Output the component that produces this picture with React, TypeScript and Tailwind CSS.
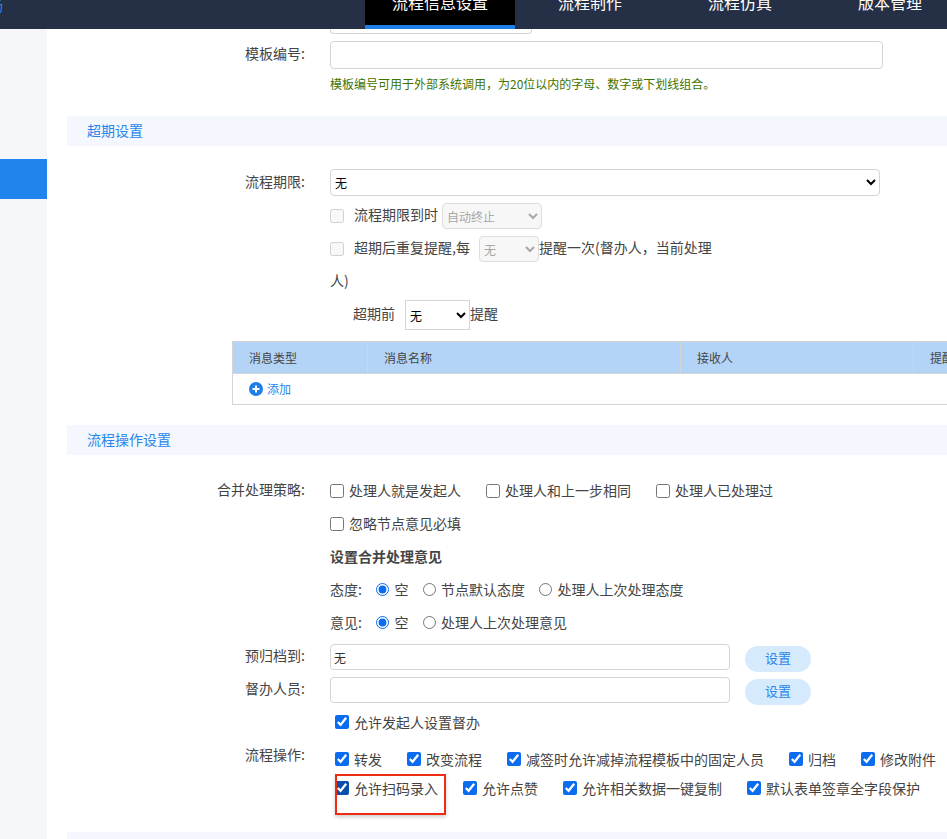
import React from 'react';

const Check = ({ label, checked = false, dark = false }: { label: string; checked?: boolean; dark?: boolean }) => (
  <label className="flex items-center gap-[5px] whitespace-nowrap">
    <input
      type="checkbox"
      defaultChecked={checked}
      className={`m-0 w-[14px] h-[14px] ${dark ? 'accent-[#0a4fa8]' : 'accent-[#0b6cf0]'}`}
    />
    <span>{label}</span>
  </label>
);

const Radio = ({ label, checked = false, name }: { label: string; checked?: boolean; name: string }) => (
  <label className="flex items-center gap-[5.5px] whitespace-nowrap">
    <input type="radio" name={name} defaultChecked={checked} className="m-0 w-[13px] h-[13px] accent-[#0b6cf0]" />
    <span>{label}</span>
  </label>
);

const Section = ({ title, className = '' }: { title: string; className?: string }) => (
  <div className={`h-[30px] bg-[#f4f7fd] pl-5 leading-[28px] text-[#2a85ea] ${className}`}>{title}</div>
);

const FieldLabel = ({ children }: { children: React.ReactNode }) => (
  <span className="w-[238px] shrink-0 text-right mr-[25px] pb-[3px] whitespace-nowrap">{children}</span>
);

const SetButton = () => (
  <button className="w-[66px] h-[26px] mt-[2px] ml-[15px] pb-[2px] rounded-[13px] bg-[#d6eafd] text-[13px] text-[#2a85ea]">设置</button>
);

const tabs = ['流程信息设置', '流程制作', '流程仿真', '版本管理'];

const App: React.FC = () => {
  return (
    <div className="h-[839px] overflow-hidden bg-white text-[14px] text-[#444] font-['Noto_Sans_CJK_SC','Liberation_Sans',sans-serif]">
      <div className="h-[29px] bg-[#253046] flex overflow-hidden">
        <div className="w-[365px] shrink-0 text-[#2a85ea] leading-[14px]">
          <span className="block -ml-[11px] -mt-[2px]">场</span>
        </div>
        {tabs.map((t, i) => (
          <div
            key={t}
            className={`w-[150px] shrink-0 h-[29px] text-center text-[16px] text-white leading-[16px] ${i === 0 ? 'bg-black border-b-4 border-[#1f7fe8]' : ''}`}
          >
            <span className="block -mt-[6px]">{t}</span>
          </div>
        ))}
      </div>

      <div className="flex">
        <div className="w-[47px] shrink-0 h-[810px] bg-[#f5f7fb] pt-[130px]">
          <div className="h-[40px] bg-[#2183ec]"></div>
        </div>

        <div className="w-[880px] shrink-0 ml-5">
          <div className="w-[202px] h-[5px] ml-[263px] border border-t-0 border-[#d5d5d5] rounded-b-[4px]"></div>
          <div className="flex items-center mt-[7px]">
            <FieldLabel>模板编号:</FieldLabel>
            <input className="w-[553px] h-[28px] border border-[#d5d5d5] rounded-[4px]" />
          </div>
          <p className="ml-[263px] mt-[6px] text-[12px] text-[#3f7300] leading-[17px] whitespace-nowrap">
            模板编号可用于外部系统调用，为20位以内的字母、数字或下划线组合。
          </p>

          <Section title="超期设置" className="mt-[24px]" />

          <div className="flex items-center mt-[23px]">
            <FieldLabel>流程期限:</FieldLabel>
            <select className="w-[550px] h-[27px] border border-[#d5d5d5] rounded-[4px] text-[12px] text-black">
              <option>无</option>
            </select>
          </div>

          <div className="ml-[263px] mt-[7px] flex items-center">
            <input type="checkbox" disabled className="m-0 mr-[10px] w-[14px] h-[14px]" />
            <span className="pb-[3px]">流程期限到时</span>
            <select disabled className="ml-[4px] w-[100px] h-[26px] bg-[#f7f7f7] border border-[#dedede] rounded-[4px] text-[12px] text-[#a8a8a8]">
              <option>自动终止</option>
            </select>
          </div>

          <div className="ml-[263px] mt-[2px] w-[390px] leading-[33px]">
            <input type="checkbox" disabled className="m-0 mr-[10px] w-[14px] h-[14px] inline-block align-middle" />
            <span>超期后重复提醒,每</span>
            <select disabled className="ml-[9px] w-[60px] h-[26px] bg-[#f7f7f7] border border-[#dedede] rounded-[4px] text-[12px] text-[#a8a8a8] inline-block align-middle">
              <option>无</option>
            </select>
            <span>提醒一次(督办人，当前处理人)</span>
          </div>

          <div className="ml-[286px] mt-[3px] flex items-center">
            <span className="pb-[3px]">超期前</span>
            <select className="ml-[10px] w-[65px] h-[30px] border border-[#d5d5d5] text-[12px] text-black">
              <option>无</option>
            </select>
            <span className="pb-[3px]">提醒</span>
          </div>

          <table className="ml-[165px] mt-[11px] w-[760px] table-fixed border-collapse text-[12px]">
            <colgroup>
              <col className="w-[135px]" />
              <col className="w-[313px]" />
              <col className="w-[233px]" />
              <col className="w-[79px]" />
            </colgroup>
            <thead>
              <tr className="h-[32px] bg-[#b3d4f6]">
                {['消息类型', '消息名称', '接收人', '提醒'].map(h => (
                  <th key={h} className="pl-[16px] text-left font-normal border border-[#d5d5d5]">{h}</th>
                ))}
              </tr>
            </thead>
            <tbody>
              <tr className="h-[31px]">
                <td colSpan={4} className="pl-[16px] border border-[#d5d5d5]">
                  <span className="flex items-center gap-[4px] text-[#2a85ea]">
                    <svg width="14" height="14" viewBox="0 0 14 14">
                      <circle cx="7" cy="7" r="7" fill="#1f7fe8" />
                      <path d="M7 3.5v7M3.5 7h7" stroke="#fff" strokeWidth="2" />
                    </svg>
                    添加
                  </span>
                </td>
              </tr>
            </tbody>
          </table>

          <Section title="流程操作设置" className="mt-[20px]" />

          <div className="mt-[19px] flex items-center h-[33px]">
            <FieldLabel>合并处理策略:</FieldLabel>
            <div className="flex gap-[25px]">
              <Check label="处理人就是发起人" />
              <Check label="处理人和上一步相同" />
              <Check label="处理人已处理过" />
            </div>
          </div>
          <div className="ml-[263px] flex items-center h-[33px]">
            <Check label="忽略节点意见必填" />
          </div>
          <div className="ml-[263px] flex items-center h-[33px] font-bold">设置合并处理意见</div>
          <div className="ml-[263px] flex items-center h-[33px] gap-[14px]">
            <span className="w-[32px]">态度:</span>
            <Radio name="attitude" label="空" checked />
            <Radio name="attitude" label="节点默认态度" />
            <Radio name="attitude" label="处理人上次处理态度" />
          </div>
          <div className="ml-[263px] flex items-center h-[33px] gap-[14px]">
            <span className="w-[32px]">意见:</span>
            <Radio name="opinion" label="空" checked />
            <Radio name="opinion" label="处理人上次处理意见" />
          </div>

          <div className="mt-[5px] flex items-start">
            <span className="w-[238px] shrink-0 mr-[25px] text-right leading-[22px]">预归档到:</span>
            <input readOnly value="无" className="w-[400px] h-[26px] pl-[3px] border border-[#d5d5d5] rounded-[4px] text-[12px] text-[#333]" />
            <SetButton />
          </div>
          <div className="mt-[5px] flex items-start">
            <span className="w-[238px] shrink-0 mr-[25px] text-right leading-[22px]">督办人员:</span>
            <input className="w-[400px] h-[26px] border border-[#d5d5d5] rounded-[4px]" />
            <SetButton />
          </div>

          <div className="mt-[7px] ml-[268px] flex items-center h-[20px]">
            <Check label="允许发起人设置督办" checked />
          </div>

          <div className="mt-[13px] flex items-start">
            <span className="w-[238px] shrink-0 text-right leading-[18px]">流程操作:</span>
            <div className="ml-[30px] pt-[4px] flex flex-col gap-[9px]">
              <div className="flex h-[20px] gap-[25px]">
                <Check label="转发" checked />
                <Check label="改变流程" checked />
                <Check label="减签时允许减掉流程模板中的固定人员" checked />
                <Check label="归档" checked />
                <Check label="修改附件" checked />
              </div>
              <div className="relative flex h-[20px] gap-[25px]">
                <Check label="允许扫码录入" checked dark />
                <Check label="允许点赞" checked />
                <Check label="允许相关数据一键复制" checked />
                <Check label="默认表单签章全字段保护" checked />
                <div className="absolute left-0 -top-[4px] w-[111px] h-[41px] border-2 border-[#f02b14] shadow-[0_2px_4px_rgba(0,0,0,0.2)] pointer-events-none"></div>
              </div>
            </div>
          </div>

          <Section title="" className="mt-[34px]" />
        </div>
      </div>
    </div>
  );
};

export default App;
